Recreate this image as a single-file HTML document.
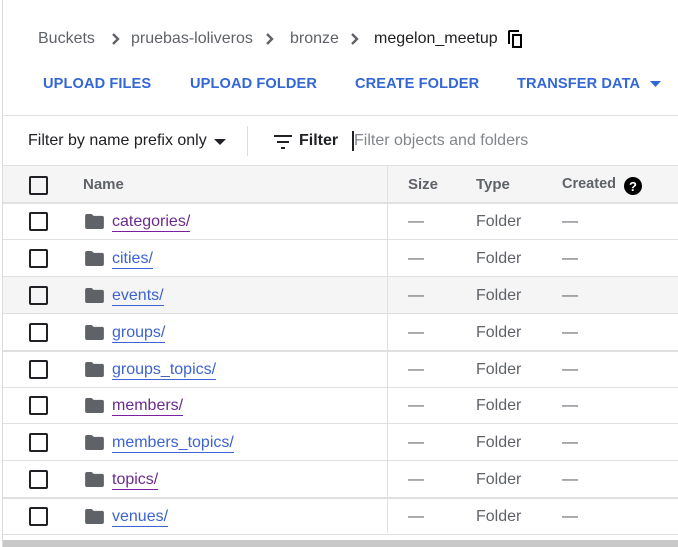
<!DOCTYPE html>
<html><head><style>
body{margin:0;width:678px;height:547px;background:#fff;font-family:"Liberation Sans",Arial,sans-serif;position:relative;overflow:hidden}
.a{position:absolute;white-space:nowrap}
.vl{position:absolute;left:2px;top:0;width:1px;height:547px;background:#dadce0}
.bc{top:30px;font-size:16px;color:#5f6368}
.btn{top:76px;font-size:14.6px;font-weight:bold;color:#3367d6;letter-spacing:0.1px}
.hl{position:absolute;left:2px;right:0;height:1px;background:#e0e0e0}
.row{position:absolute;left:3px;right:0;height:36px;border-bottom:1px solid #e0e0e0}
.cb{position:absolute;left:26px;top:9px;width:15px;height:15px;border:2px solid #202124;border-radius:2px}
.fi{position:absolute;left:82px;top:11px;width:19px;height:15px}
.nm{position:absolute;left:109px;top:10px;font-size:16px;color:#3c63d0;border-bottom:1px solid #3c63d0;line-height:18px}
.nm.v{color:#6b2a8e;border-color:#7b1fa2}
.c{position:absolute;top:10px;font-size:16px;color:#5f6368}
.ch{position:absolute;top:32px}
</style></head><body>
<div class="vl"></div>
<div class="a bc" style="left:38px">Buckets</div>
<svg class="ch" style="left:111px" width="9" height="14"><path d="M2 2l5 5-5 5" stroke="#5f6368" stroke-width="2.4" fill="none"/></svg>
<div class="a bc" style="left:131px">pruebas-loliveros</div>
<svg class="ch" style="left:265px" width="9" height="14"><path d="M2 2l5 5-5 5" stroke="#5f6368" stroke-width="2.4" fill="none"/></svg>
<div class="a bc" style="left:290px">bronze</div>
<svg class="ch" style="left:350px" width="9" height="14"><path d="M2 2l5 5-5 5" stroke="#5f6368" stroke-width="2.4" fill="none"/></svg>
<div class="a bc" style="left:374px;color:#202124">megelon_meetup</div>
<svg class="a" style="left:507px;top:29px" width="17" height="20" viewBox="0 0 17 20"><path d="M1 2V15h2V3h9V1H2z M5 5h10v14H5z M7 7v10h6V7z" fill="#000" fill-rule="evenodd"/></svg>
<div class="a btn" style="left:43px">UPLOAD FILES</div>
<div class="a btn" style="left:190px">UPLOAD FOLDER</div>
<div class="a btn" style="left:355px">CREATE FOLDER</div>
<div class="a btn" style="left:517px">TRANSFER DATA</div>
<svg class="a" style="left:650px;top:81px" width="11" height="6"><path d="M0 0h11L5.5 6z" fill="#3367d6"/></svg>
<div class="hl" style="top:115px"></div>
<div class="a" style="left:28px;top:132px;font-size:16px;color:#202124">Filter by name prefix only</div>
<svg class="a" style="left:214px;top:139px" width="12" height="6"><path d="M0 0h12L6 6z" fill="#202124"/></svg>
<div class="a" style="left:247px;top:126px;width:1px;height:30px;background:#dadce0"></div>
<svg class="a" style="left:274px;top:135px" width="18" height="14"><path d="M0 1h18M3 7h12M7 13h4" stroke="#202124" stroke-width="2"/></svg>
<div class="a" style="left:299px;top:132px;font-size:16px;color:#202124;font-weight:bold">Filter</div>
<div class="a" style="left:352px;top:131px;width:2px;height:20px;background:#202124"></div>
<div class="a" style="left:354px;top:132px;font-size:16px;color:#80868b">Filter objects and folders</div>
<div class="hl" style="top:165px"></div>
<div class="row" style="top:166px;background:#f5f5f5;border-bottom:2px solid #e0e0e0">
<div class="cb" style="top:10px"></div>
<div class="c" style="left:80px;font-weight:bold;font-size:15px;color:#5f6368;top:10px">Name</div>
<div class="c" style="left:405px;font-weight:bold;font-size:15px;top:10px">Size</div>
<div class="c" style="left:473px;font-weight:bold;font-size:15px;top:10px">Type</div>
<div class="c" style="left:559px;font-weight:bold;font-size:14.5px;top:10px">Created</div>
<svg class="a" style="left:621px;top:11px" width="18" height="18"><circle cx="9" cy="9" r="9" fill="#000"/><text x="9" y="14" font-size="13" font-weight="bold" fill="#fff" text-anchor="middle" font-family="Liberation Sans">?</text></svg>
</div>
<div class="row" style="top:203px"><div class="cb"></div><svg class="fi" viewBox="0 0 20 16"><path d="M0 2a2 2 0 0 1 2-2h5l2 2h9a2 2 0 0 1 2 2v10a2 2 0 0 1-2 2H2a2 2 0 0 1-2-2z" fill="#5f6368"/></svg><div class="nm v">categories/</div><div class="c" style="left:405px">—</div><div class="c" style="left:473px">Folder</div><div class="c" style="left:559px">—</div></div>
<div class="row" style="top:240px"><div class="cb"></div><svg class="fi" viewBox="0 0 20 16"><path d="M0 2a2 2 0 0 1 2-2h5l2 2h9a2 2 0 0 1 2 2v10a2 2 0 0 1-2 2H2a2 2 0 0 1-2-2z" fill="#5f6368"/></svg><div class="nm">cities/</div><div class="c" style="left:405px">—</div><div class="c" style="left:473px">Folder</div><div class="c" style="left:559px">—</div></div>
<div class="row" style="top:277px;background:#f5f5f5"><div class="cb"></div><svg class="fi" viewBox="0 0 20 16"><path d="M0 2a2 2 0 0 1 2-2h5l2 2h9a2 2 0 0 1 2 2v10a2 2 0 0 1-2 2H2a2 2 0 0 1-2-2z" fill="#5f6368"/></svg><div class="nm">events/</div><div class="c" style="left:405px">—</div><div class="c" style="left:473px">Folder</div><div class="c" style="left:559px">—</div></div>
<div class="row" style="top:314px;border-bottom:2px solid #e0e0e0"><div class="cb"></div><svg class="fi" viewBox="0 0 20 16"><path d="M0 2a2 2 0 0 1 2-2h5l2 2h9a2 2 0 0 1 2 2v10a2 2 0 0 1-2 2H2a2 2 0 0 1-2-2z" fill="#5f6368"/></svg><div class="nm">groups/</div><div class="c" style="left:405px">—</div><div class="c" style="left:473px">Folder</div><div class="c" style="left:559px">—</div></div>
<div class="row" style="top:351px"><div class="cb"></div><svg class="fi" viewBox="0 0 20 16"><path d="M0 2a2 2 0 0 1 2-2h5l2 2h9a2 2 0 0 1 2 2v10a2 2 0 0 1-2 2H2a2 2 0 0 1-2-2z" fill="#5f6368"/></svg><div class="nm">groups_topics/</div><div class="c" style="left:405px">—</div><div class="c" style="left:473px">Folder</div><div class="c" style="left:559px">—</div></div>
<div class="row" style="top:387px"><div class="cb"></div><svg class="fi" viewBox="0 0 20 16"><path d="M0 2a2 2 0 0 1 2-2h5l2 2h9a2 2 0 0 1 2 2v10a2 2 0 0 1-2 2H2a2 2 0 0 1-2-2z" fill="#5f6368"/></svg><div class="nm v">members/</div><div class="c" style="left:405px">—</div><div class="c" style="left:473px">Folder</div><div class="c" style="left:559px">—</div></div>
<div class="row" style="top:424px"><div class="cb"></div><svg class="fi" viewBox="0 0 20 16"><path d="M0 2a2 2 0 0 1 2-2h5l2 2h9a2 2 0 0 1 2 2v10a2 2 0 0 1-2 2H2a2 2 0 0 1-2-2z" fill="#5f6368"/></svg><div class="nm">members_topics/</div><div class="c" style="left:405px">—</div><div class="c" style="left:473px">Folder</div><div class="c" style="left:559px">—</div></div>
<div class="row" style="top:461px;border-bottom:2px solid #e0e0e0"><div class="cb"></div><svg class="fi" viewBox="0 0 20 16"><path d="M0 2a2 2 0 0 1 2-2h5l2 2h9a2 2 0 0 1 2 2v10a2 2 0 0 1-2 2H2a2 2 0 0 1-2-2z" fill="#5f6368"/></svg><div class="nm v">topics/</div><div class="c" style="left:405px">—</div><div class="c" style="left:473px">Folder</div><div class="c" style="left:559px">—</div></div>
<div class="row" style="top:498px"><div class="cb"></div><svg class="fi" viewBox="0 0 20 16"><path d="M0 2a2 2 0 0 1 2-2h5l2 2h9a2 2 0 0 1 2 2v10a2 2 0 0 1-2 2H2a2 2 0 0 1-2-2z" fill="#5f6368"/></svg><div class="nm">venues/</div><div class="c" style="left:405px">—</div><div class="c" style="left:473px">Folder</div><div class="c" style="left:559px">—</div></div>
<div class="a" style="left:387px;top:166px;width:1px;height:367px;background:#e0e0e0"></div>
<div class="a" style="left:3px;top:540px;width:675px;height:7px;background:#c8c8c8"></div>
</body></html>
